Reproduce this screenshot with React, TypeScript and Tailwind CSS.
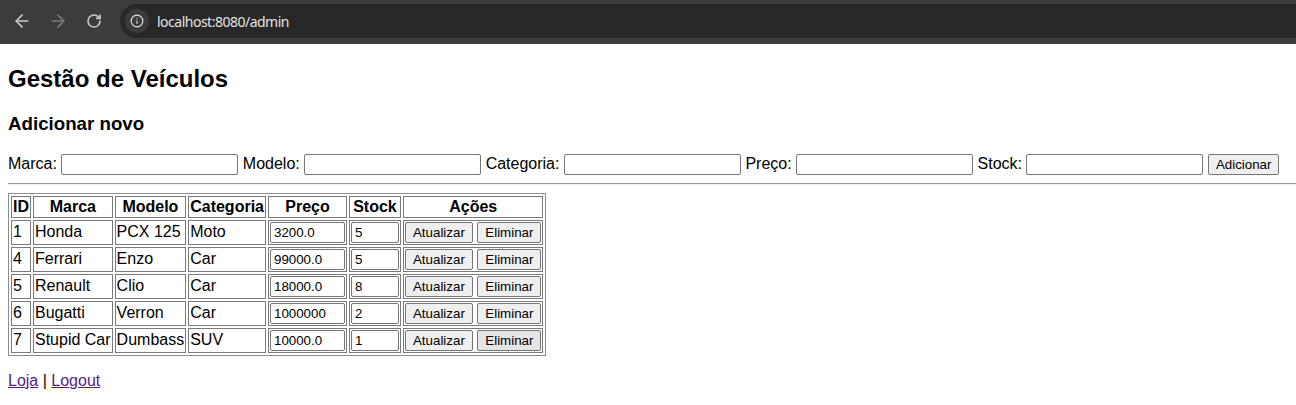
import { ArrowLeft, ArrowRight, RotateCw, Info } from 'lucide-react';

type Veiculo = {
  id: number;
  marca: string;
  modelo: string;
  categoria: string;
  preco: string;
  stock: string;
};

const veiculos: Veiculo[] = [
  { id: 1, marca: 'Honda', modelo: 'PCX 125', categoria: 'Moto', preco: '3200.0', stock: '5' },
  { id: 4, marca: 'Ferrari', modelo: 'Enzo', categoria: 'Car', preco: '99000.0', stock: '5' },
  { id: 5, marca: 'Renault', modelo: 'Clio', categoria: 'Car', preco: '18000.0', stock: '8' },
  { id: 6, marca: 'Bugatti', modelo: 'Verron', categoria: 'Car', preco: '1000000', stock: '2' },
  { id: 7, marca: 'Stupid Car', modelo: 'Dumbass', categoria: 'SUV', preco: '10000.0', stock: '1' },
];

const inputCls =
  'inline-block box-border border border-[#767676] rounded-[2px] bg-white px-[3px] py-[2px] text-[13.33px] leading-[normal] text-black align-baseline outline-none';
const btnCls =
  'inline-block box-border border border-[#767676] rounded-[2px] px-[7px] py-[2px] text-[13.33px] leading-[normal] text-black align-baseline';
const cellCls = 'border border-[#7a7a7a] p-[1px]';

function BrowserBar() {
  return (
    <div className="flex h-[44px] items-start bg-[#3c3c3c] font-['Noto_Sans',sans-serif]">
      {/* nav buttons */}
      <div className="flex h-[34px] items-center mt-[4px]">
        <div className="flex w-[36px] justify-center ml-[4px]">
          <ArrowLeft size={20} strokeWidth={2} className="text-[#c7c7c7]" />
        </div>
        <div className="flex w-[36px] justify-center">
          <ArrowRight size={20} strokeWidth={2} className="text-[#7b7b7b]" />
        </div>
        <div className="flex w-[36px] justify-center">
          <RotateCw size={16} strokeWidth={2.5} className="text-[#c7c7c7]" />
        </div>
      </div>
      {/* address pill */}
      <div className="mt-[4px] ml-[8px] flex h-[34px] flex-1 items-center rounded-l-full bg-[#282828] pl-[5px]">
        <div className="flex h-[24px] w-[24px] items-center justify-center rounded-full bg-[#3b3b3b]">
          <Info size={14} strokeWidth={2} className="text-[#e3e3e3]" />
        </div>
        <span className="ml-[8px] text-[14px] tracking-[-0.5px] text-[#e3e3e3]">localhost:8080/admin</span>
      </div>
    </div>
  );
}

export default function App() {
  return (
    <div className="min-h-screen bg-white font-['Liberation_Sans',Arial,sans-serif] text-black">
      <BrowserBar />
      <div className="pt-[21px] pb-[8px] pl-[8px]">
        <h2 className="text-[24px] font-bold leading-[normal]">Gestão de Veículos</h2>
        <h3 className="mt-[20px] text-[18.72px] font-bold leading-[normal]">Adicionar novo</h3>

        {/* add form */}
        <form className="mt-[18.72px] whitespace-nowrap text-[16px] leading-[normal]">
          Marca:{' '}
          <input className={`${inputCls} w-[177px]`} />{' '}
          Modelo:{' '}
          <input className={`${inputCls} w-[177px]`} />{' '}
          Categoria:{' '}
          <input className={`${inputCls} w-[177px]`} />{' '}
          Preço:{' '}
          <input className={`${inputCls} w-[177px]`} />{' '}
          Stock:{' '}
          <input className={`${inputCls} w-[177px]`} />{' '}
          <button type="button" className={`${btnCls} bg-[#efefef]`}>
            Adicionar
          </button>
        </form>

        <hr className="mt-[8px] mb-[8px] border-t border-b border-t-[#9a9a9a] border-b-[#eeeeee]" />

        {/* vehicle list */}
        <table className="border-separate border-spacing-[2px] border border-[#8c8c8c] text-[16px] leading-[normal]">
          <thead>
            <tr>
              <th className={`${cellCls} text-center font-bold`}>ID</th>
              <th className={`${cellCls} text-center font-bold`}>Marca</th>
              <th className={`${cellCls} text-center font-bold`}>Modelo</th>
              <th className={`${cellCls} text-center font-bold`}>Categoria</th>
              <th className={`${cellCls} text-center font-bold`}>Preço</th>
              <th className={`${cellCls} text-center font-bold`}>Stock</th>
              <th className={`${cellCls} text-center font-bold`}>Ações</th>
            </tr>
          </thead>
          <tbody>
            {veiculos.map((v, i) => (
              <tr key={v.id}>
                <td className={`${cellCls} whitespace-nowrap`}>{v.id}</td>
                <td className={`${cellCls} whitespace-nowrap`}>{v.marca}</td>
                <td className={`${cellCls} whitespace-nowrap`}>{v.modelo}</td>
                <td className={`${cellCls} whitespace-nowrap`}>{v.categoria}</td>
                <td className={`${cellCls} whitespace-nowrap`}>
                  <input className={`${inputCls} w-[75px]`} defaultValue={v.preco} />
                </td>
                <td className={`${cellCls} whitespace-nowrap`}>
                  <input className={`${inputCls} w-[48px]`} defaultValue={v.stock} />
                </td>
                <td className={`${cellCls} whitespace-nowrap`}>
                  <button type="button" className={`${btnCls} bg-[#efefef]`}>
                    Atualizar
                  </button>{' '}
                  <button
                    type="button"
                    className={`${btnCls} ${i === veiculos.length - 1 ? 'bg-[#e5e5e5]' : 'bg-[#efefef]'}`}
                  >
                    Eliminar
                  </button>
                </td>
              </tr>
            ))}
          </tbody>
        </table>

        <p className="mt-[16px] text-[16px] leading-[normal]">
          <a href="#" className="text-[#551a8b] underline">
            Loja
          </a>{' '}
          |{' '}
          <a href="#" className="text-[#551a8b] underline">
            Logout
          </a>
        </p>
      </div>
    </div>
  );
}
